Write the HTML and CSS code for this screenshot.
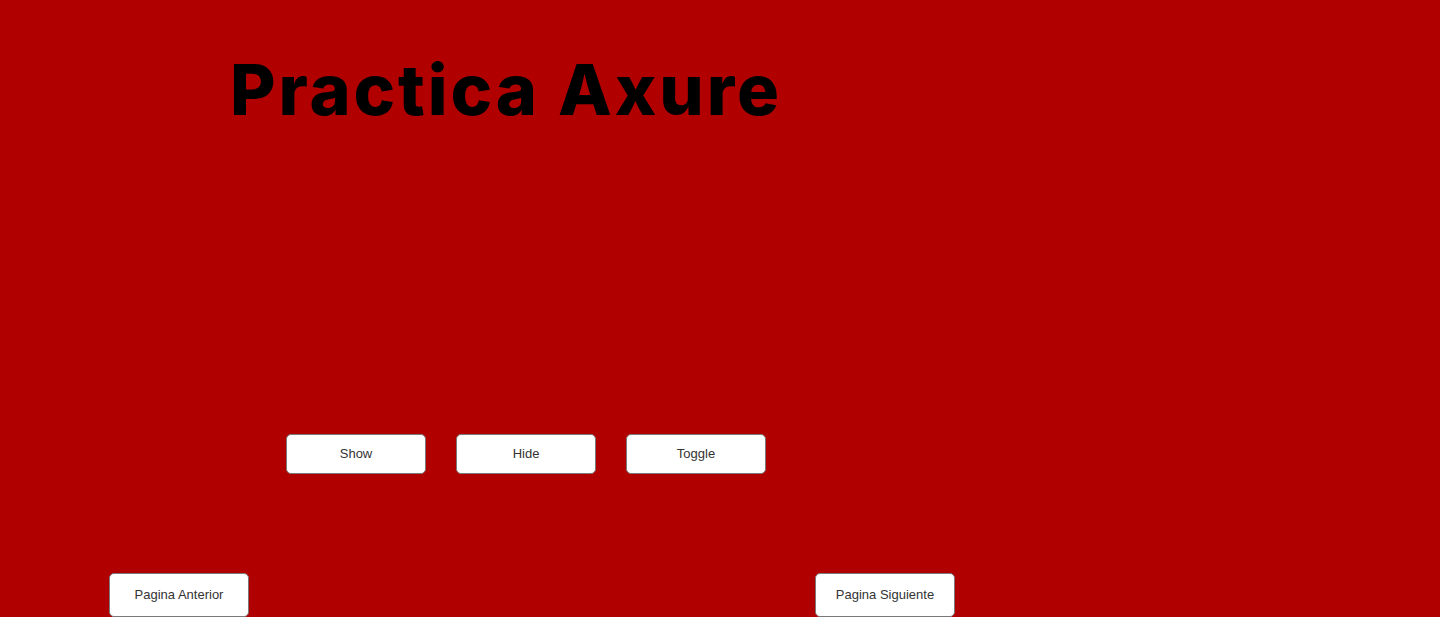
FILE: index.html
```html
<!DOCTYPE html>
<html lang="es">
<head>
<meta charset="utf-8">
<title>Practica Axure</title>
<link rel="stylesheet" href="styles.css">
</head>
<body>
<main class="page">
  <h1 class="title">Practica Axure</h1>
  <div class="actions">
    <button class="btn">Show</button>
    <button class="btn">Hide</button>
    <button class="btn">Toggle</button>
  </div>
  <nav class="pager">
    <button class="btn btn-nav">Pagina Anterior</button>
    <button class="btn btn-nav">Pagina Siguiente</button>
  </nav>
</main>
</body>
</html>
```
FILE: styles.css
```css
html, body {
  margin: 0;
  padding: 0;
  background: #b10000;
  height: 100%;
  overflow: hidden;
}
.page {
  display: flex;
  flex-direction: column;
  align-items: flex-start;
}
.title {
  margin: 46px 0 0 230px;
  font-family: Inter, "Liberation Sans", sans-serif;
  font-weight: 800;
  font-size: 70px;
  line-height: 88px;
  color: #000;
  letter-spacing: 2.9px;
}
.actions {
  display: flex;
  gap: 30px;
  margin: 300px 0 0 286px;
}
.btn {
  box-sizing: border-box;
  width: 140px;
  height: 40px;
  background: #fff;
  border: 1px solid #797979;
  border-radius: 5px;
  font-family: "Liberation Sans", Arial, sans-serif;
  font-size: 13px;
  color: #333;
  padding: 0 0 2px;
}
.pager {
  display: flex;
  gap: 566px;
  margin: 99px 0 0 109px;
}
.btn-nav {
  height: 44px;
}
```
